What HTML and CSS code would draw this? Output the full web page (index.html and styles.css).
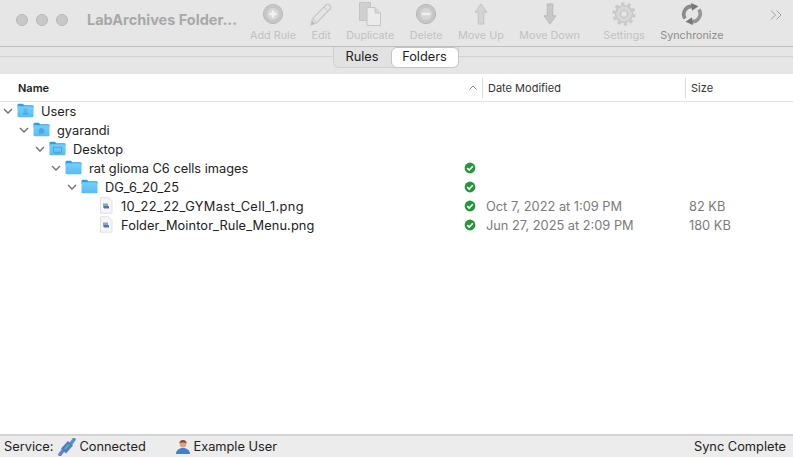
FILE: index.html
```html
<!DOCTYPE html>
<html lang="en">
<head>
<meta charset="utf-8">
<title>LabArchives Folder Monitor</title>
<link rel="stylesheet" href="styles.css">
</head>
<body>
<svg class="defs" width="0" height="0" aria-hidden="true">
  <defs>
    <linearGradient id="fold" x1="0" y1="0" x2="0" y2="1"><stop offset="0" stop-color="#74cffa"/><stop offset="1" stop-color="#58bcf3"/></linearGradient>
    <symbol id="folder" viewBox="0 0 17 15">
      <path d="M0.5 3V2a1.3 1.3 0 0 1 1.3-1.3h4l1.500 1.600h8a1.300 1.300 0 0 1 1.300 1.300V5H0.500z" fill="#2f9fe4"/>
      <rect x="0.500" y="3.200" width="16" height="11" rx="1.200" fill="url(#fold)"/>
    </symbol>
    <symbol id="folder-user" viewBox="0 0 17 15">
      <use href="#folder"/>
      <circle cx="8.500" cy="7.200" r="1.500" fill="none" stroke="#4aa6de"/>
      <path d="M5.800 11.500c0-3 5.400-3 5.400 0z" fill="#4aa6de"/>
    </symbol>
    <symbol id="folder-home" viewBox="0 0 17 15">
      <use href="#folder"/>
      <path d="M8.500 5.500l3.500 3h-1v3h-5v-3h-1z" fill="#4aa6de"/>
    </symbol>
    <symbol id="folder-desk" viewBox="0 0 17 15">
      <use href="#folder"/>
      <rect x="4.500" y="6.300" width="8" height="5" fill="none" stroke="#4aa6de"/>
      <path d="M6 12.300h5" stroke="#4aa6de"/>
    </symbol>
    <symbol id="check" viewBox="0 0 12 12">
      <circle cx="6" cy="6" r="5.400" fill="#25963c"/>
      <path d="M3.200 6.100l2 2 3.600-3.900" fill="none" stroke="#fff" stroke-width="1.600"/>
    </symbol>
    <symbol id="file" viewBox="0 0 14 17">
      <path d="M1.500 0.700h8l3.500 3.500v12h-11.500z" fill="#f6f6f6" stroke="#dadada" stroke-width="0.800"/>
      <rect x="4" y="6.500" width="5" height="4.500" fill="#8ba4c6"/>
      <rect x="5" y="9" width="5" height="2.500" fill="#56759f"/>
    </symbol>
    <symbol id="chev" viewBox="0 0 10 6">
      <path d="M1 1l4 4 4-4" fill="none" stroke="#6e6e6e" stroke-width="1.300"/>
    </symbol>
  </defs>
</svg>

<div class="window">
  <header class="toolbar">
    <div class="lights"><span class="light"></span><span class="light"></span><span class="light"></span></div>
    <div class="title">LabArchives Folder...</div>
    <div class="tools">
      <div class="tool">
        <svg class="tool-icon" viewBox="0 0 24 24"><circle cx="12" cy="12" r="10.500" fill="#c6c6c6" stroke="#b8b8b8"/><circle cx="12" cy="12" r="6.500" fill="#d6d6d6"/><path d="M12 8v8M8 12h8" stroke="#f1f1f1" stroke-width="2.600"/></svg>
        <span>Add Rule</span>
      </div>
      <div class="tool">
        <svg class="tool-icon tool-icon-big" viewBox="0 0 24 24"><path d="M2 23l1.500-6.500L17 3a2.500 2.500 0 0 1 3.500 0l.5.500a2.500 2.500 0 0 1 0 3.500L7.500 21z" fill="#e4e4e4" stroke="#c6c6c6" stroke-width="1.100"/><path d="M4 16.500l3.500 4M15 5l4 4" stroke="#c6c6c6"/><path d="M2 23l1-4.500 3 3z" fill="#bbb"/></svg>
        <span>Edit</span>
      </div>
      <div class="tool">
        <svg class="tool-icon tool-icon-big" viewBox="0 0 24 24"><path d="M1.500 0.500h11v18h-11z" fill="#d0d0d0" stroke="#c4c4c4"/><path d="M9 5.500h8l5.500 5.500v12.500H9z" fill="#ebebeb" stroke="#c6c6c6"/><path d="M17 5.500V11h5.500" fill="#d6d6d6" stroke="#c6c6c6"/></svg>
        <span>Duplicate</span>
      </div>
      <div class="tool">
        <svg class="tool-icon" viewBox="0 0 24 24"><circle cx="12" cy="12" r="10.500" fill="#c6c6c6" stroke="#b4b4b4"/><circle cx="12" cy="12" r="6.500" fill="#d6d6d6"/><path d="M7.500 12h9" stroke="#f1f1f1" stroke-width="2.600"/></svg>
        <span>Delete</span>
      </div>
      <div class="tool">
        <svg class="tool-icon" viewBox="0 0 24 24"><path d="M12 1l6.500 9H15v13H9V10H5.500z" fill="#d4d4d4" stroke="#c2c2c2"/></svg>
        <span>Move Up</span>
      </div>
      <div class="tool">
        <svg class="tool-icon" viewBox="0 0 24 24"><path d="M12 23l6.500-9H15V1H9v13H5.500z" fill="#c8c8c8" stroke="#b8b8b8"/></svg>
        <span>Move Down</span>
      </div>
      <div class="tool tool-settings">
        <svg class="tool-icon tool-icon-big" viewBox="0 0 24 24"><circle cx="12" cy="12" r="8.500" fill="#d6d6d6" stroke="#c2c2c2" stroke-width="1.200"/><circle cx="12" cy="12" r="10" fill="none" stroke="#cacaca" stroke-width="3.400" stroke-dasharray="3.300 2.980"/><circle cx="12" cy="12" r="3.500" fill="#e6e6e6" stroke="#c0c0c0"/></svg>
        <span>Settings</span>
      </div>
      <div class="tool tool-active">
        <svg class="tool-icon tool-icon-soft" viewBox="0 0 24 24"><path d="M4.500 17a8.500 8.500 0 0 1 9-13" fill="none" stroke="#8a8a8a" stroke-width="4"/><path d="M11 0l8 3.500-7 5z" fill="#777"/><path d="M19.500 7a8.500 8.500 0 0 1-9 13" fill="none" stroke="#969696" stroke-width="4"/><path d="M13 24l-8-3.500 7-5z" fill="#777"/></svg>
        <span>Synchronize</span>
      </div>
    </div>
    <svg class="more" viewBox="0 0 12 10"><path d="M1 0.500l4.500 4.500L1 9.500M6.500 0.500L11 5l-4.500 4.500" fill="none" stroke="#a0a0a0"/></svg>
  </header>

  <nav class="tabband">
    <div class="segments">
      <div class="segment">Rules</div>
      <div class="segment segment-on">Folders</div>
    </div>
  </nav>

  <main class="list">
    <div class="list-head">
      <div class="col-name">Name</div>
      <div class="col-sort"><svg class="sort" viewBox="0 0 8 5"><path d="M0.500 4.500L4 1l3.500 3.500" fill="none" stroke="#8a8a8a"/></svg></div>
      <div class="col-date head-cell">Date Modified</div>
      <div class="col-size head-cell">Size</div>
    </div>

    <div class="rows">
      <div class="row">
        <div class="col-name depth-0"><svg class="chev"><use href="#chev"/></svg><svg class="folder"><use href="#folder-user"/></svg><span>Users</span></div>
      </div>
      <div class="row">
        <div class="col-name depth-1"><svg class="chev"><use href="#chev"/></svg><svg class="folder"><use href="#folder-home"/></svg><span>gyarandi</span></div>
      </div>
      <div class="row">
        <div class="col-name depth-2"><svg class="chev"><use href="#chev"/></svg><svg class="folder"><use href="#folder-desk"/></svg><span>Desktop</span></div>
      </div>
      <div class="row">
        <div class="col-name depth-3"><svg class="chev"><use href="#chev"/></svg><svg class="folder"><use href="#folder"/></svg><span>rat glioma C6 cells images</span></div>
        <div class="col-sort"><svg class="check"><use href="#check"/></svg></div>
      </div>
      <div class="row">
        <div class="col-name depth-4"><svg class="chev"><use href="#chev"/></svg><svg class="folder"><use href="#folder"/></svg><span>DG_6_20_25</span></div>
        <div class="col-sort"><svg class="check"><use href="#check"/></svg></div>
      </div>
      <div class="row">
        <div class="col-name depth-5"><svg class="file"><use href="#file"/></svg><span class="name-digits">10_22_22_GYMast_Cell_1.png</span></div>
        <div class="col-sort"><svg class="check"><use href="#check"/></svg></div>
        <div class="col-date cell-muted">Oct 7, 2022 at 1:09 PM</div>
        <div class="col-size cell-muted">82 KB</div>
      </div>
      <div class="row">
        <div class="col-name depth-5"><svg class="file"><use href="#file"/></svg><span class="name-wide">Folder_Mointor_Rule_Menu.png</span></div>
        <div class="col-sort"><svg class="check"><use href="#check"/></svg></div>
        <div class="col-date cell-muted">Jun 27, 2025 at 2:09 PM</div>
        <div class="col-size cell-muted">180 KB</div>
      </div>
    </div>
  </main>

  <footer class="status">
    <span class="status-label">Service:</span>
    <svg class="status-plug" viewBox="0 0 18 18"><path d="M2 16.500L5 12.500" stroke="#5a88c8" stroke-width="3.600" stroke-linecap="round"/><path d="M13 5.500L16 1.500" stroke="#5a8ed2" stroke-width="3.600" stroke-linecap="round"/><path d="M3 10.500L10 3l5 4.500-7 8z" fill="#4d80c8"/><path d="M7 11L11 6.500" stroke="#6fb58c" stroke-width="1.500"/></svg>
    <span class="status-conn">Connected</span>
    <svg class="status-user" viewBox="0 0 16 16"><circle cx="8" cy="5" r="3.400" fill="#e0a27c"/><path d="M4.400 4.500a3.600 3.600 0 0 1 7.200 0c-1.500-1.400-5.700-1.400-7.200 0z" fill="#8a4a28"/><path d="M1 15c0-3.600 3-6 7-6s7 2.400 7 6z" fill="#3f7fd8"/></svg>
    <span>Example User</span>
    <span class="status-right">Sync Complete</span>
  </footer>
</div>
</body>
</html>
```

FILE: styles.css
```css
* { box-sizing: border-box; }
html, body { margin: 0; height: 100%; }
body {
  font-family: Inter, "Liberation Sans", sans-serif;
  background: #fff;
  color: #2a2a2a;
  overflow: hidden;
}
.defs { display: block; height: 0; }
.window { width: 793px; height: 457px; display: flex; flex-direction: column; }

.toolbar {
  height: 47px;
  flex: none;
  display: flex;
  align-items: flex-start;
  background: #e6e6e6;
  border-bottom: 1px solid #bfbfbf;
}
.lights { display: flex; gap: 8px; padding: 14px 0 0 16px; }
.light { width: 12px; height: 12px; border-radius: 50%; background: #c8c8c8; border: 1px solid #b8b8b8; }
.title { margin-left: 19px; padding-top: 11px; width: 163px; font-size: 14.5px; font-weight: 700; color: #a8a8a8; white-space: nowrap; }
.tools { display: flex; gap: 15.5px; padding-top: 3px; }
.tool { display: flex; flex-direction: column; align-items: center; font-size: 10.8px; color: #c2c2c2; white-space: nowrap; }
.tool-icon { width: 22px; height: 22px; margin: 0 -8px 4px; filter: blur(0.3px); flex: none; }
.tool-icon-big { width: 24px; height: 24px; margin-top: -1px; margin-bottom: 3px; }
.tool-icon-soft { filter: blur(0.6px); }
.tool-settings { margin-left: 8px; }
.tool-active { color: #8c8c8c; }
.more { position: absolute; left: 770px; top: 10px; width: 12px; height: 10px; }

.tabband {
  height: 27px;
  flex: none;
  background: #e6e6e6;
  position: relative;
  display: flex;
  justify-content: center;
}
.tabband::before { content: ""; position: absolute; left: 0; right: 0; top: 9px; height: 1px; background: #d2d2d2; }
.segments {
  position: relative;
  display: flex;
  height: 21px;
  margin-left: -2px;
  background: #e2e2e2;
  border: 1px solid #d0d0d0;
  border-top: 0;
  border-radius: 0 0 6px 6px;
  font-size: 12.8px;
  line-height: 20px;
  color: #222;
}
.segment { width: 57px; text-align: center; }
.segment-on { width: 68px; background: #fff; border: 1px solid #c4c4c4; border-radius: 6px; height: 21px; margin-right: -1px; line-height: 18px; }

.list { flex: 1; min-height: 0; background: #fff; }
.list-head {
  height: 28px;
  display: flex;
  align-items: center;
  border-bottom: 1px solid #e2e2e2;
  font-size: 11px;
  color: #333;
}
.list-head .col-name { padding-left: 18px; font-weight: 600; color: #222; }
.head-cell { border-left: 1px solid #dcdcdc; height: 20px; line-height: 20px; }
.col-name { width: 461px; flex: none; display: flex; align-items: center; white-space: nowrap; }
.col-sort { width: 21px; flex: none; display: flex; align-items: center; padding-left: 3px; }
.list-head .col-sort { padding-left: 8px; }
.col-date { width: 203px; flex: none; padding-left: 4px; }
.head-cell.col-date { padding-left: 5px; }
.col-size { flex: 1; padding-left: 3px; }
.head-cell.col-size { padding-left: 5px; }
.rows { margin-top: -1px; }
.row { height: 19px; display: flex; align-items: center; font-size: 12.8px; color: #222; }
.row span, .row .cell-muted { padding-top: 2px; }
.cell-muted { color: #7b7b7b; }
.col-size.cell-muted { padding-left: 4px; }
.name-digits { letter-spacing: 0.36px; }
.name-wide { letter-spacing: 0.1px; }
.sort { width: 8px; height: 5px; display: block; }
.check { width: 12px; height: 12px; display: block; }
.chev { width: 10px; height: 6px; flex: none; margin-right: 4px; }
.folder { width: 17px; height: 15px; flex: none; margin-right: 7px; }
.file { width: 14px; height: 17px; flex: none; margin-right: 8px; }
.depth-0 { padding-left: 3px; }
.depth-1 { padding-left: 19px; }
.depth-2 { padding-left: 35px; }
.depth-3 { padding-left: 51px; }
.depth-4 { padding-left: 67px; }
.depth-5 { padding-left: 99px; }

.status {
  height: 23px;
  flex: none;
  display: flex;
  align-items: center;
  background: #ececec;
  border-top: 2px solid #d4d4d4;
  font-size: 12.8px;
  color: #222;
  padding: 0 7px 0 4px;
}
.status-plug { width: 18px; height: 18px; margin: 0 3px 0 5px; }
.status-conn { width: 96px; }
.status-user { width: 16px; height: 16px; margin-right: 2px; }
.status-right { margin-left: auto; }
```
